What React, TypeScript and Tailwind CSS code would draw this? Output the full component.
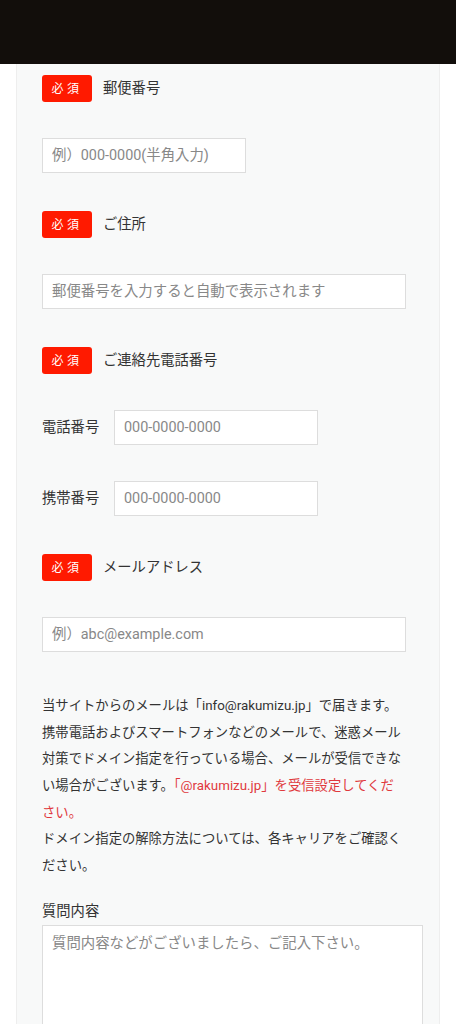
const font = { fontFamily: 'Roboto, "Noto Sans CJK JP", "Noto Sans", sans-serif' };

function Badge() {
  return (
    <span className="flex h-[27px] w-[50px] shrink-0 items-center justify-center rounded-[3px] bg-[#ff1a00] text-[12px] tracking-[0.3em] text-white">
      必須
    </span>
  );
}

function Heading({ text }: { text: string }) {
  return (
    <div className="flex items-center gap-[11px]">
      <Badge />
      <span className="whitespace-nowrap text-[14.3px] text-[#333]">{text}</span>
    </div>
  );
}

function Input({ placeholder, width }: { placeholder: string; width: string }) {
  return (
    <input
      type="text"
      placeholder={placeholder}
      className={`${width} h-[35px] shrink-0 border border-[#dddddd] bg-white px-[9px] text-[14.4px] text-[#333] placeholder:text-[#888] outline-none`}
    />
  );
}

function TelRow({ label }: { label: string }) {
  return (
    <div className="flex items-center">
      <span className="w-[72px] shrink-0 whitespace-nowrap text-[14.3px] text-[#333]">{label}</span>
      <Input placeholder="000-0000-0000" width="w-[204px]" />
    </div>
  );
}

export default function App() {
  return (
    <div className="min-h-screen bg-white" style={font}>
      <div className="h-16 bg-[#120e0b]" />
      <div className="mx-4 border-x border-b border-[#eeeeee] bg-[#f8f9f9] pl-[25px] pr-[17px] pt-[11px] pb-10">
        <Heading text="郵便番号" />
        <div className="mt-9">
          <Input placeholder="例）000-0000(半角入力)" width="w-[204px]" />
        </div>

        <div className="mt-[38px]">
          <Heading text="ご住所" />
        </div>
        <div className="mt-9">
          <Input placeholder="郵便番号を入力すると自動で表示されます" width="w-[364px]" />
        </div>

        <div className="mt-[38px]">
          <Heading text="ご連絡先電話番号" />
        </div>
        <div className="mt-9">
          <TelRow label="電話番号" />
        </div>
        <div className="mt-9">
          <TelRow label="携帯番号" />
        </div>

        <div className="mt-[38px]">
          <Heading text="メールアドレス" />
        </div>
        <div className="mt-9">
          <Input placeholder="例）abc@example.com" width="w-[364px]" />
        </div>

        <p className="mt-[41px] w-[364px] text-[13.33px] leading-[2] text-[#333]">
          当サイトからのメールは「info@rakumizu.jp」で届きます。
          <br />
          携帯電話およびスマートフォンなどのメールで、迷惑メール対策でドメイン指定を行っている場合、メールが受信できない場合がございます。
          <span className="text-[#e0393e]">「@rakumizu.jp」を受信設定してください。</span>
          <br />
          ドメイン指定の解除方法については、各キャリアをご確認ください。
        </p>

        <div className="mt-[21px]">
          <div className="text-[14.3px] leading-[21px] text-[#333]">質問内容</div>
          <textarea
            placeholder="質問内容などがございましたら、ご記入下さい。"
            className="mt-[3px] block h-[200px] w-[381px] resize-none border border-[#dddddd] bg-white px-[9px] py-[7px] text-[14.4px] text-[#333] placeholder:text-[#888] outline-none"
          />
        </div>
      </div>
    </div>
  );
}
